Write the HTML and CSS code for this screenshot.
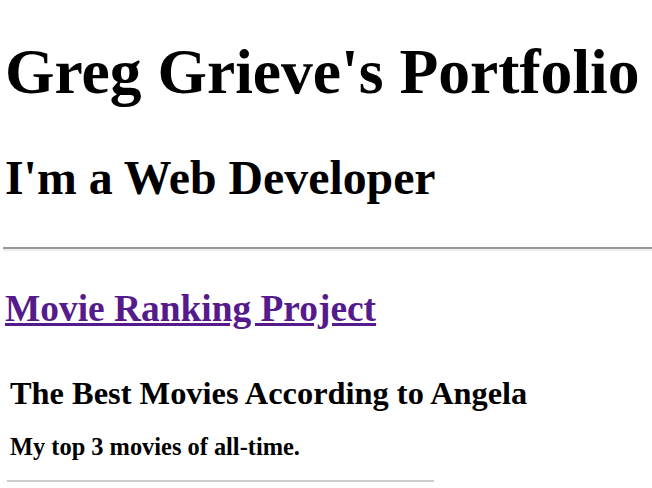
FILE: index.html
```html
<!DOCTYPE html>
<html>
<head>
<meta charset="utf-8">
<link rel="stylesheet" href="styles.css">
</head>
<body>
<header class="intro">
  <h1 class="title">Greg Grieve's Portfolio</h1>
  <h2 class="subtitle">I'm a Web Developer</h2>
</header>
<hr class="rule">
<section class="project">
  <h3 class="project-link"><a href="#">Movie Ranking Project</a></h3>
  <div class="embed">
    <h4 class="embed-title">The Best Movies According to Angela</h4>
    <h5 class="embed-sub">My top 3 movies of all-time.</h5>
    <hr class="embed-rule">
  </div>
</section>
</body>
</html>
```
FILE: styles.css
```css
html, body {
  margin: 0;
  padding: 0;
  background: #fff;
}
body {
  font-family: "Liberation Serif", "Times New Roman", serif;
  color: #000;
  padding: 0 0 0 5px;
  overflow: hidden;
}
.title {
  font-size: 63.6px;
  line-height: 64px;
  margin: 40px 0 0 0;
  font-weight: bold;
  white-space: nowrap;
}
.subtitle {
  font-size: 47.8px;
  line-height: 48px;
  margin: 50px 0 0 0;
}
.rule {
  margin: 45px 0 0 -2px;
  border: none;
  border-top: 2px solid #999;
  border-bottom: 2px solid #eee;
  height: 0;
}
.project-link {
  font-size: 37.4px;
  line-height: 37.4px;
  margin: 39px 0 0 0;
}
.project-link a {
  color: #551a8b;
  text-decoration: underline;
}
.embed {
  padding-left: 5px;
}
.embed-title {
  font-size: 32.4px;
  line-height: 32px;
  margin: 50px 0 0 0;
}
.embed-sub {
  font-size: 24.4px;
  line-height: 25px;
  margin: 25px 0 0 0;
}
.embed-rule {
  width: 427px;
  margin: 21px 0 0 -3px;
  border: none;
  border-top: 2px solid #ccc;
  height: 0;
}
```
